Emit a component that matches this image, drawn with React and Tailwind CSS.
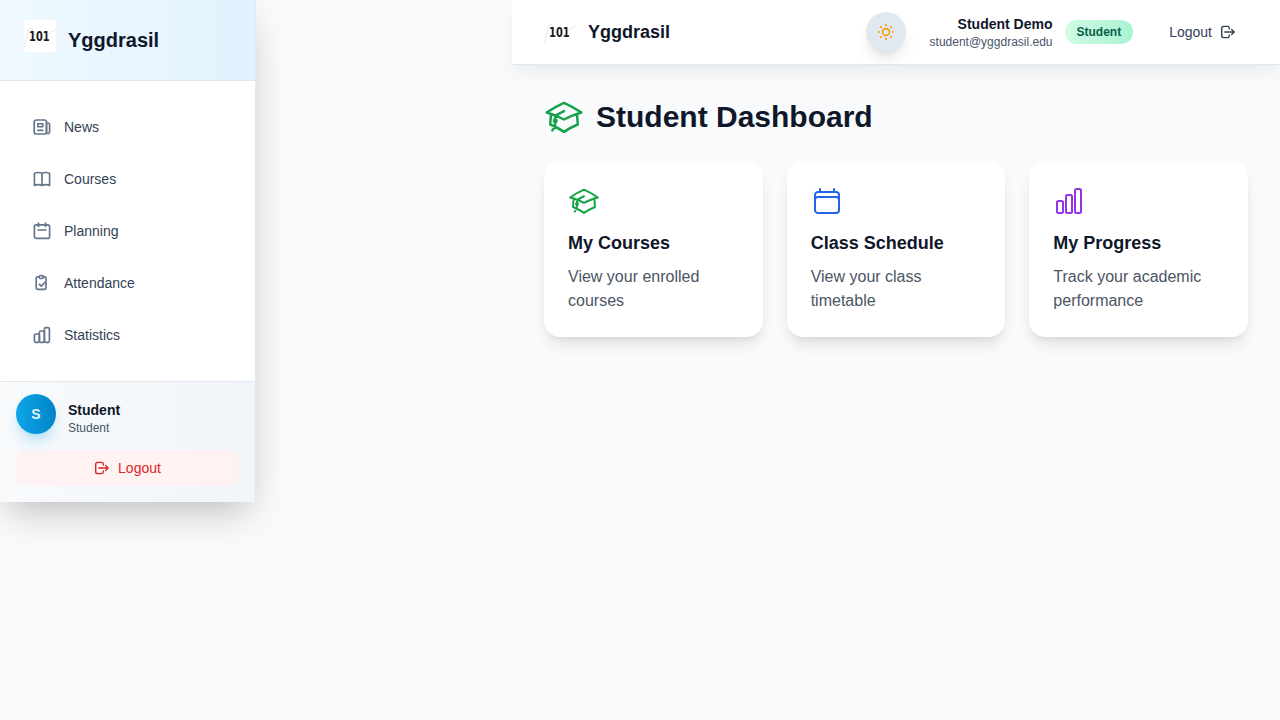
import React from 'react';
import { HiOutlineAcademicCap, HiOutlineCalendar, HiOutlineChartBar } from 'react-icons/hi2';

function Stroke({ className, width = 1.65, children }) {
  return (
    <svg viewBox="0 0 20 20" fill="none" stroke="currentColor" strokeWidth={width} strokeLinecap="round" strokeLinejoin="round" className={className}>
      {children}
    </svg>
  );
}

function Logo({ className }) {
  return (
    <svg viewBox="0 0 32 32" overflow="visible" className={className}>
      <path d="M0.5 28L4 11Q5 7 8 9L12 18Q17 23 22 17Q26 11 32 9.5" fill="none" stroke="#e8e8e8" strokeWidth="1" />
      <text transform="translate(5 21) scale(1 1.3)" fontFamily="DejaVu Sans Condensed, DejaVu Sans" fontStretch="condensed" fontWeight="700" fontSize="11" fill="#1a1a1a">101</text>
    </svg>
  );
}

const nav = [
  ['News', <><rect x="2.2" y="3" width="12.3" height="14" rx="2" /><path d="M14.5 6H16a1.6 1.6 0 0 1 1.6 1.6v7.8a1.6 1.6 0 0 1-3.1 0V6M5.8 6.700h5v3h-5zM5.800 13.400h5" /></>],
  ['Courses', <path d="M10 4.5v12M10 4.6C8.500 3.200 4.500 3.200 2.400 4.400v12C4.500 15.300 8.500 15.300 10 16.500c1.500-1.200 5.500-1.200 7.600-.1v-12C15.500 3.200 11.500 3.200 10 4.600z" />],
  ['Planning', <><rect x="2.4" y="3.8" width="15.2" height="13.6" rx="2" /><path d="M6.500 2v3.600M13.500 2v3.600M6 9h8" /></>],
  ['Attendance', <><path d="M7 3.800H5.500A1.300 1.300 0 0 0 4.200 5.100v9.900a1.300 1.300 0 0 0 1.300 1.300h7.200a1.300 1.300 0 0 0 1.300-1.300V5.100a1.300 1.300 0 0 0-1.300-1.300H11" /><rect x="7.3" y="2.5" width="4" height="3" rx="1.3" /><path d="M7.300 11.300l2 1.900 3.700-3.900" /></>],
  ['Statistics', <><rect x="2.4" y="9" width="5" height="8.400" rx="1.3" /><rect x="7.4" y="6" width="5" height="11.400" rx="1.3" /><rect x="12.4" y="2.600" width="5" height="14.800" rx="1.3" /></>],
];

function LogoutIcon({ className }) {
  return (
    <svg viewBox="0 0 16 16" fill="none" stroke="currentColor" strokeWidth="1.4" strokeLinecap="round" strokeLinejoin="round" className={className}>
      <path d="M9.300 5V4A1.800 1.800 0 0 0 7.500 2.400H3.500A1.800 1.800 0 0 0 1.700 4.200v7.600a1.800 1.800 0 0 0 1.800 1.800h4A1.800 1.800 0 0 0 9.300 12v-1M4.800 8h9.400M11.600 5.500L14.200 8l-2.600 2.500" />
    </svg>
  );
}

const cards = [
  [<HiOutlineAcademicCap className="size-8 text-[#16a34a]" />, 'My Courses', 'View your enrolled courses'],
  [<HiOutlineCalendar className="size-8 text-[#2563eb]" />, 'Class Schedule', 'View your class timetable'],
  [<HiOutlineChartBar className="size-8 text-[#9333ea]" />, 'My Progress', 'Track your academic performance'],
];

export default function App() {
  return (
    <div className="flex h-screen items-start overflow-hidden bg-[#f9fafc] font-['Liberation_Sans',sans-serif] text-[#0f172a]">
      <aside className="mr-64 w-64 shrink-0 border-r border-[#e2e8f0] bg-white shadow-[0_16px_36px_-8px_rgba(0,0,0,0.25)]">
        <div className="flex h-[81px] items-center gap-3 border-b border-[#e2e8f0] bg-linear-to-r from-[#f0f9ff] to-[#e0f2fe] px-6">
          <Logo className="mb-2 size-8 bg-white" />
          <span className="text-xl font-bold">Yggdrasil</span>
        </div>
        <nav className="flex flex-col gap-2 px-4 py-6">
          {nav.map(([label, icon]) => (
            <a key={label} className="flex h-11 items-center gap-3 px-4 text-sm text-[#334155]">
              <Stroke className="size-5 text-[#64748b]">{icon}</Stroke>
              {label}
            </a>
          ))}
        </nav>
        <div className="h-[121px] border-t border-[#e2e8f0] bg-linear-to-r from-[#f8fafc] to-[#f1f5f9] px-4 pt-3">
          <div className="flex h-14 gap-3">
            <div className="mt-[0.4px] flex size-10 items-center justify-center rounded-full bg-linear-to-r from-[#0ea5e9] to-[#0284c7] text-sm font-bold text-[#e6f4fc] shadow-lg shadow-[#0ea5e9]/25">S</div>
            <div className="pt-1.5">
              <div className="text-sm/5 font-bold">Student</div>
              <div className="text-xs/4 text-[#475569]">Student</div>
            </div>
          </div>
          <button className="flex h-9 w-full items-center justify-center gap-2 rounded-lg bg-[#fef2f2] text-sm text-[#dc2626]">
            <LogoutIcon className="size-4" />Logout
          </button>
        </div>
      </aside>
      <div className="min-w-0 flex-1">
        <header className="flex h-[65px] items-center border-b border-[#e2e8f0] bg-white px-8 shadow-[0_8px_20px_-4px_rgba(0,0,0,0.08)]">
          <Logo className="size-8" />
          <span className="ml-3 text-lg font-bold">Yggdrasil</span>
          <button className="ml-auto flex size-10 items-center justify-center rounded-full bg-[#e2e8f0] text-[#f59e0b] shadow-lg">
            <Stroke className="size-5">
              <circle cx="10" cy="10" r="3.4" />
              <path strokeLinecap="butt" strokeWidth="1.7" d="M10 2v2M10 16v2M2 10h2M16 10h2M4.300 4.300l1.400 1.400M14.300 14.300l1.400 1.400M4.300 15.700l1.400-1.400M14.300 5.700l1.400-1.400" />
            </Stroke>
          </button>
          <div className="ml-6 -mr-px text-right">
            <div className="text-sm/5 font-bold">Student Demo</div>
            <div className="text-xs/4 text-[#475569]">student@yggdrasil.edu</div>
          </div>
          <span className="ml-[13px] rounded-full bg-linear-to-r from-[#d1fae5] to-[#a7f3d0] px-3 py-1 text-xs/4 font-bold text-[#065f46]">Student</span>
          <button className="mr-3 ml-9 flex items-center gap-2 text-sm text-[#334155]">Logout<LogoutIcon className="size-4" /></button>
        </header>
        <main className="p-8">
          <h1 className="mb-6 flex items-center gap-3 text-3xl/10 font-bold">
            <HiOutlineAcademicCap className="size-10 text-[#16a34a]" />Student Dashboard
          </h1>
          <div className="grid grid-cols-3 gap-6">
            {cards.map(([icon, title, text]) => (
              <section key={title} className="rounded-2xl bg-white p-6 shadow-lg">
                {icon}
                <h2 className="mt-3 mb-2 text-lg/7 font-bold">{title}</h2>
                <p className="text-base/6 text-[#4b5563]">{text}</p>
              </section>
            ))}
          </div>
        </main>
      </div>
    </div>
  );
}
